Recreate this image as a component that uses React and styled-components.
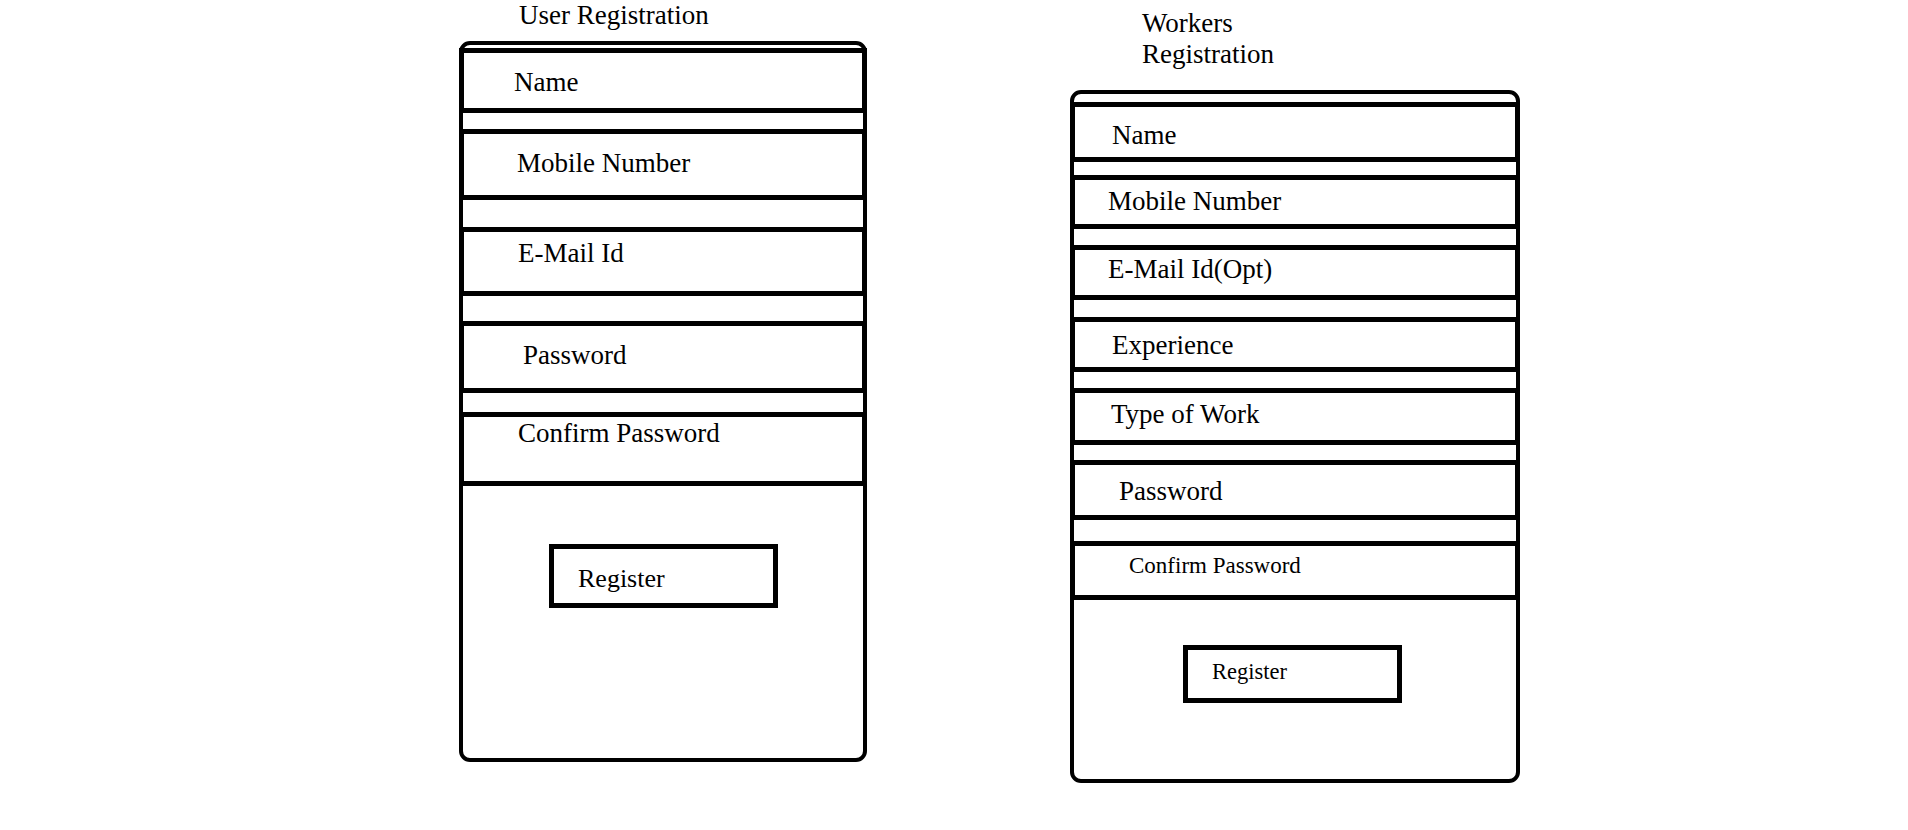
import React from 'react';
import styled, { createGlobalStyle } from 'styled-components';

const GlobalStyle = createGlobalStyle`
  html, body {
    margin: 0;
    background: #fff;
  }
  body {
    font-family: "Liberation Serif", "Times New Roman", serif;
    color: #000;
  }
`;

const Page = styled.div`
  display: flex;
  align-items: flex-start;
  gap: 203px;
  padding-left: 459px;
  min-height: 830px;
  box-sizing: border-box;
`;

const Column = styled.section`
  width: ${p => p.$w}px;
  padding-top: ${p => p.$pt || 0}px;
  flex-shrink: 0;
`;

const Title = styled.h2`
  margin: 0 0 ${p => p.$mb}px ${p => p.$ml}px;
  max-width: ${p => p.$maxw || 400}px;
  font-size: 27px;
  font-weight: normal;
  line-height: ${p => p.$lh || 30}px;
`;

const Card = styled.form`
  box-sizing: border-box;
  height: ${p => p.$h}px;
  border: 4px solid #000;
  border-radius: 11px;
  display: flex;
  flex-direction: column;
  align-items: flex-start;
`;

const Field = styled.div`
  box-sizing: border-box;
  align-self: stretch;
  height: ${p => p.$h}px;
  margin: ${p => p.$gap}px -4px 0;
  border: 5px solid #000;
  padding: ${p => p.$top + 1}px 0 0 ${p => p.$left}px;
  font-size: ${p => p.$size || 27}px;
  line-height: ${p => (p.$size ? p.$size + 4 : 30)}px;
`;

const Button = styled.div`
  box-sizing: border-box;
  width: ${p => p.$w}px;
  height: ${p => p.$h}px;
  margin: ${p => p.$mt}px 0 0 ${p => p.$ml}px;
  border: 5px solid #000;
  padding: ${p => p.$top}px 0 0 24px;
  font-size: ${p => p.$size}px;
  line-height: ${p => p.$size + 4}px;
`;

const userFields = [
  { label: 'Name', h: 65, gap: 3, top: 13, left: 50 },
  { label: 'Mobile Number', h: 71, gap: 16, top: 13, left: 53 },
  { label: 'E-Mail Id', h: 69, gap: 27, top: 5, left: 54 },
  { label: 'Password', h: 72, gap: 25, top: 13, left: 59 },
  { label: 'Confirm Password', h: 74, gap: 19, top: 0, left: 54 },
];

const workerFields = [
  { label: 'Name', h: 60, gap: 8, top: 12, left: 37 },
  { label: 'Mobile Number', h: 54, gap: 13, top: 5, left: 33 },
  { label: 'E-Mail Id(Opt)', h: 55, gap: 16, top: 3, left: 33 },
  { label: 'Experience', h: 55, gap: 17, top: 7, left: 37 },
  { label: 'Type of Work', h: 57, gap: 16, top: 5, left: 36 },
  { label: 'Password', h: 60, gap: 15, top: 10, left: 44 },
  { label: 'Confirm Password', h: 59, gap: 21, top: 5, left: 54, size: 23 },
];

const RegForm = ({ fields, height, button }) => (
  <Card $h={height}>
    {fields.map(f => (
      <Field key={f.label} $h={f.h} $gap={f.gap} $top={f.top} $left={f.left} $size={f.size}>
        {f.label}
      </Field>
    ))}
    <Button $w={button.w} $h={button.h} $mt={button.mt} $ml={button.ml} $top={button.top} $size={button.size}>
      Register
    </Button>
  </Card>
);

export default function App() {
  return (
    <>
      <GlobalStyle />
      <Page>
        <Column $w={408}>
          <Title $ml={60} $mb={11}>User Registration</Title>
          <RegForm
            fields={userFields}
            height={721}
            button={{ w: 229, h: 64, mt: 58, ml: 86, top: 15, size: 26 }}
          />
        </Column>
        <Column $w={450} $pt={8}>
          <Title $ml={72} $mb={20} $lh={31} $maxw={200}>Workers Registration</Title>
          <RegForm
            fields={workerFields}
            height={693}
            button={{ w: 219, h: 58, mt: 45, ml: 109, top: 9, size: 22.5 }}
          />
        </Column>
      </Page>
    </>
  );
}
